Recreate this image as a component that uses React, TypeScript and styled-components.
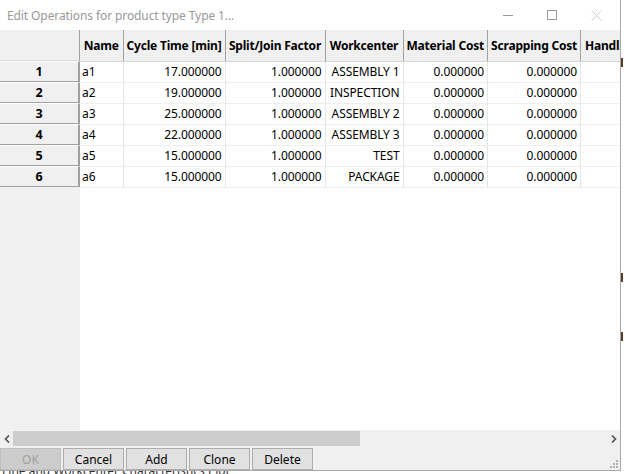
import styled, { createGlobalStyle } from 'styled-components';

const GlobalStyle = createGlobalStyle`
  html, body {
    margin: 0;
    padding: 0;
    background: #ffffff;
  }
  * {
    box-sizing: border-box;
  }
`;

interface IOperation {
  name: string;
  cycle: string;
  factor: string;
  workcenter: string;
  material: string;
  scrapping: string;
}

const operations: IOperation[] = [
  { name: 'a1', cycle: '17.000000', factor: '1.000000', workcenter: 'ASSEMBLY 1', material: '0.000000', scrapping: '0.000000' },
  { name: 'a2', cycle: '19.000000', factor: '1.000000', workcenter: 'INSPECTION', material: '0.000000', scrapping: '0.000000' },
  { name: 'a3', cycle: '25.000000', factor: '1.000000', workcenter: 'ASSEMBLY 2', material: '0.000000', scrapping: '0.000000' },
  { name: 'a4', cycle: '22.000000', factor: '1.000000', workcenter: 'ASSEMBLY 3', material: '0.000000', scrapping: '0.000000' },
  { name: 'a5', cycle: '15.000000', factor: '1.000000', workcenter: 'TEST', material: '0.000000', scrapping: '0.000000' },
  { name: 'a6', cycle: '15.000000', factor: '1.000000', workcenter: 'PACKAGE', material: '0.000000', scrapping: '0.000000' },
];

const columns = [
  { title: 'Name', width: 43 },
  { title: 'Cycle Time [min]', width: 102 },
  { title: 'Split/Join Factor', width: 100 },
  { title: 'Workcenter', width: 78 },
  { title: 'Material Cost', width: 83 },
  { title: 'Scrapping Cost', width: 92 },
  { title: 'Handling Cost', width: 90 },
];

// bits of the window lying behind the dialog, seen past its right edge
const behindMarks = [30, 206, 50];

const Screen = styled.div`
  width: 625px;
  height: 474px;
  display: flex;
  flex-direction: column;
  overflow: hidden;
  font-family: 'Noto Sans', 'Open Sans', sans-serif;
  font-size: 12px;
  color: #000;
`;

const Desk = styled.div`
  display: flex;
  flex: 1;
  min-height: 0;
`;

const Window = styled.div`
  width: 621px;
  display: flex;
  flex-direction: column;
  border-right: 1px solid #a8a8a8;
  border-bottom: 1px solid #a8a8a8;
  background: #f0f0f0;
`;

const Behind = styled.div`
  flex: 1;
  background: #ffffff;
  display: flex;
  flex-direction: column;
`;

const Fragment = styled.div<{ offset: number }>`
  margin-top: ${(p) => p.offset}px;
  width: 3px;
  height: 9px;
  border-left: 2px solid #5a3a2a;
`;

const BehindStrip = styled.div`
  height: 3px;
  overflow: hidden;
  background: #ffffff;
  position: relative;
`;

const BehindText = styled.div`
  position: absolute;
  top: -7px;
  left: 2px;
  font-size: 12px;
  line-height: 14px;
  color: #333;
  white-space: nowrap;
`;

const TitleBar = styled.div`
  height: 30px;
  background: #ffffff;
  display: flex;
  align-items: center;
  padding-left: 7px;
`;

const Title = styled.div`
  flex: 1;
  color: #999999;
  font-size: 12px;
  letter-spacing: -0.1px;
`;

const Controls = styled.div`
  display: flex;
  height: 30px;
  padding-right: 2px;
`;

const ControlButton = styled.div`
  width: 44px;
  height: 30px;
  display: flex;
  align-items: center;
  justify-content: center;
`;

const GridArea = styled.div`
  flex: 1;
  display: flex;
  min-height: 0;
  background: #ffffff;
`;

const Gutter = styled.div`
  width: 80px;
  background: #f0f0f0;
  display: flex;
  flex-direction: column;
`;

const Corner = styled.div`
  height: 31px;
  border-right: 1px solid #a0a0a0;
  border-bottom: 1px solid #d8d8d8;
`;

const RowHead = styled.div`
  height: 21px;
  display: flex;
  align-items: center;
  justify-content: center;
  font-weight: 700;
  font-size: 12.5px;
  border-top: 1px solid #ffffff;
  border-bottom: 1px solid #a0a0a0;
  border-right: 2px solid #a0a0a0;
`;

const Sheet = styled.div`
  flex: 1;
  overflow: hidden;
`;

const Table = styled.table`
  border-collapse: collapse;
  table-layout: fixed;
  width: max-content;
`;

const HeadCell = styled.th<{ width: number }>`
  width: ${(p) => p.width}px;
  height: 31px;
  padding: 0 3px;
  background: #f0f0f0;
  font-weight: 700;
  font-size: 12px;
  text-align: center;
  white-space: nowrap;
  overflow: hidden;
  border-right: 1px solid #a0a0a0;
  border-bottom: 1px solid #d8d8d8;
  letter-spacing: -0.2px;
`;

const Cell = styled.td<{ align?: string }>`
  height: 21px;
  padding: 0 3px 0 2px;
  text-align: ${(p) => p.align || 'right'};
  white-space: nowrap;
  overflow: hidden;
  border-right: 1px solid #e6e6e6;
  border-bottom: 1px solid #efefef;
  letter-spacing: -0.1px;
`;

const ScrollBar = styled.div`
  height: 17px;
  display: flex;
  align-items: center;
  background: #f0f0f0;
`;

const Arrow = styled.div`
  width: 13px;
  height: 17px;
  display: flex;
  align-items: center;
  justify-content: center;
`;

const Track = styled.div`
  flex: 1;
  height: 15px;
  display: flex;
`;

const Thumb = styled.div`
  width: 347px;
  height: 15px;
  background: #cdcdcd;
`;

const ButtonBar = styled.div`
  height: 23px;
  display: flex;
  align-items: flex-end;
  gap: 2px;
  position: relative;
`;

const Button = styled.button<{ disabled?: boolean }>`
  width: 61px;
  height: 22px;
  margin: 0;
  padding: 0;
  font-family: inherit;
  font-size: 12px;
  color: ${(p) => (p.disabled ? '#a0a0a0' : '#000000')};
  background: ${(p) => (p.disabled ? '#cccccc' : '#e1e1e1')};
  border: 1px solid ${(p) => (p.disabled ? '#bfbfbf' : '#adadad')};
`;

const Grip = styled.svg`
  position: absolute;
  right: 2px;
  bottom: 2px;
`;

const ArrowIcon = ({ dir }: { dir: 'left' | 'right' }) => (
  <svg width="6" height="8" viewBox="0 0 6 8">
    <path
      d={dir === 'left' ? 'M5 0.5 L1.5 4 L5 7.5' : 'M1 0.5 L4.5 4 L1 7.5'}
      fill="none"
      stroke="#505050"
      strokeWidth="1.6"
    />
  </svg>
);

const App = () => {
  return (
    <Screen>
      <GlobalStyle />
      <Desk>
        <Window>
          <TitleBar>
            <Title>Edit Operations for product type Type 1...</Title>
            <Controls>
              <ControlButton>
                <svg width="10" height="10" viewBox="0 0 10 10">
                  <path d="M0 5.5 H10" stroke="#999" strokeWidth="1" />
                </svg>
              </ControlButton>
              <ControlButton>
                <svg width="10" height="10" viewBox="0 0 10 10">
                  <rect x="0.5" y="0.5" width="9" height="9" fill="none" stroke="#999" />
                </svg>
              </ControlButton>
              <ControlButton>
                <svg width="11" height="11" viewBox="0 0 11 11">
                  <path d="M0.5 0.5 L10.5 10.5 M10.5 0.5 L0.5 10.5" stroke="#d0d0d0" />
                </svg>
              </ControlButton>
            </Controls>
          </TitleBar>
          <GridArea>
            <Gutter>
              <Corner />
              {operations.map((_, i) => (
                <RowHead key={i}>{i + 1}</RowHead>
              ))}
            </Gutter>
            <Sheet>
              <Table>
                <thead>
                  <tr>
                    {columns.map((c) => (
                      <HeadCell key={c.title} width={c.width}>
                        {c.title}
                      </HeadCell>
                    ))}
                  </tr>
                </thead>
                <tbody>
                  {operations.map((op) => (
                    <tr key={op.name}>
                      <Cell align="left">{op.name}</Cell>
                      <Cell>{op.cycle}</Cell>
                      <Cell>{op.factor}</Cell>
                      <Cell>{op.workcenter}</Cell>
                      <Cell>{op.material}</Cell>
                      <Cell>{op.scrapping}</Cell>
                      <Cell />
                    </tr>
                  ))}
                </tbody>
              </Table>
            </Sheet>
          </GridArea>
          <ScrollBar>
            <Arrow>
              <ArrowIcon dir="left" />
            </Arrow>
            <Track>
              <Thumb />
            </Track>
            <Arrow>
              <ArrowIcon dir="right" />
            </Arrow>
          </ScrollBar>
          <ButtonBar>
            <Button disabled>OK</Button>
            <Button>Cancel</Button>
            <Button>Add</Button>
            <Button>Clone</Button>
            <Button>Delete</Button>
            <Grip width="9" height="9" viewBox="0 0 9 9">
              <rect x="7" y="1" width="2" height="2" fill="#b0b0b0" />
              <rect x="4" y="4" width="2" height="2" fill="#b0b0b0" />
              <rect x="7" y="4" width="2" height="2" fill="#b0b0b0" />
              <rect x="1" y="7" width="2" height="2" fill="#b0b0b0" />
              <rect x="4" y="7" width="2" height="2" fill="#b0b0b0" />
              <rect x="7" y="7" width="2" height="2" fill="#b0b0b0" />
            </Grip>
          </ButtonBar>
        </Window>
        <Behind>
          {behindMarks.map((offset, i) => (
            <Fragment key={i} offset={i === 0 ? 58 : offset} />
          ))}
        </Behind>
      </Desk>
      <BehindStrip>
        <BehindText>Line and Workcenter Characteristics Plot</BehindText>
      </BehindStrip>
    </Screen>
  );
};

export default App;
